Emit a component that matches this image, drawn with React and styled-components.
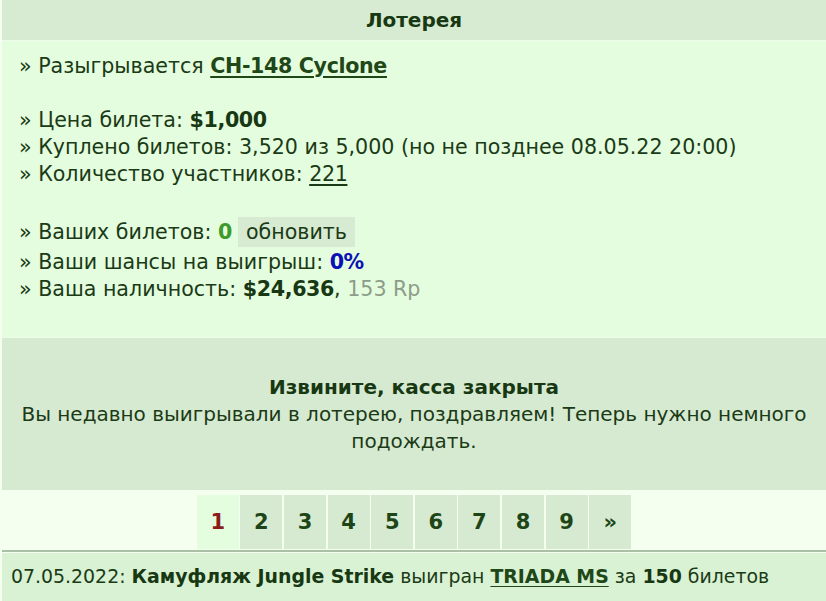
import React from "react";
import styled, { createGlobalStyle } from "styled-components";

const GlobalStyle = createGlobalStyle`
  html, body {
    margin: 0;
    padding: 0;
    background: #f4fff0;
  }
  body {
    font-family: "DejaVu Sans", Verdana, sans-serif;
    font-size: 20px;
    color: #1b3a16;
  }
`;

const Page = styled.div`
  margin-left: 2px;
  display: flex;
  flex-direction: column;
`;

const Title = styled.div`
  background: #d6ebd1;
  height: 40px;
  display: flex;
  align-items: center;
  justify-content: center;
  font-weight: bold;
  color: #173812;
  border-bottom: 1px solid #ecfce8;
`;

const Info = styled.div`
  background: #e4fddf;
  padding: 12px 17px 34px;
  font-size: 20.6px;
  line-height: 27px;

  b, a {
    letter-spacing: -0.35px;
  }
`;

const Line = styled.div`
  min-height: 27px;
`;

const Gap = styled.div`
  height: 27px;
`;

const Strong = styled.b`
  color: ${(p) => p.$tone || "#173812"};
`;

const Link = styled.a`
  color: #1f4718;
  font-weight: bold;
  text-decoration: underline;
  text-underline-offset: 3px;
`;

const Plain = styled.a`
  color: #1b3a16;
  text-decoration: underline;
  text-underline-offset: 3px;
`;

const Muted = styled.span`
  color: #8c9c88;
`;

const RefreshButton = styled.span`
  display: inline-block;
  background: #d6ebd1;
  padding: 2px 8px 1px;
  margin: 2px 0 2px 6px;
  line-height: 27px;
  color: #1b3a16;
`;

const Closed = styled.div`
  background: #d6ead1;
  border-top: 1px solid #ecfce8;
  padding: 36px 16px 35px;
  text-align: center;
  line-height: 27px;
`;

const Pager = styled.div`
  background: #f4fff0;
  display: flex;
  justify-content: center;
  gap: 1.6px;
  padding: 4px 0 1px;
  margin-top: 1px;
  border-bottom: 2px solid #aac0a5;
`;

const PageCell = styled.span`
  width: 42px;
  height: 54px;
  display: flex;
  align-items: center;
  justify-content: center;
  font-weight: bold;
  font-size: 21px;
  background: ${(p) => (p.$current ? "#e4fddf" : "#d6ead1")};
  color: ${(p) => (p.$current ? "#8b1c1c" : "#1d4517")};
`;

const History = styled.div`
  background: #d8f2d3;
  margin-top: 1px;
  padding: 10px 9px 11px;
  font-size: 18.9px;
  line-height: 27px;
`;

const pages = ["1", "2", "3", "4", "5", "6", "7", "8", "9", "»"];

export default function App() {
  return (
    <Page>
      <GlobalStyle />
      <Title>Лотерея</Title>
      <Info>
        <Line>
          » Разыгрывается <Link>CH-148 Cyclone</Link>
        </Line>
        <Gap />
        <Line>
          » Цена билета: <Strong>$1,000</Strong>
        </Line>
        <Line>» Куплено билетов: 3,520 из 5,000 (но не позднее 08.05.22 20:00)</Line>
        <Line>
          » Количество участников: <Plain>221</Plain>
        </Line>
        <Gap />
        <Line>
          » Ваших билетов: <Strong $tone="#3d9a2b">0</Strong>
          <RefreshButton>обновить</RefreshButton>
        </Line>
        <Line>
          » Ваши шансы на выигрыш: <Strong $tone="#0a10b4">0%</Strong>
        </Line>
        <Line>
          » Ваша наличность: <Strong>$24,636</Strong>, <Muted>153 Rp</Muted>
        </Line>
      </Info>
      <Closed>
        <Strong>Извините, касса закрыта</Strong>
        <div>
          Вы недавно выигрывали в лотерею, поздравляем! Теперь нужно немного
          подождать.
        </div>
      </Closed>
      <Pager>
        {pages.map((p, i) => (
          <PageCell key={p} $current={i === 0}>
            {p}
          </PageCell>
        ))}
      </Pager>
      <History>
        07.05.2022: <Strong>Камуфляж Jungle Strike</Strong> выигран{" "}
        <Link>TRIADA MS</Link> за <Strong>150</Strong> билетов
      </History>
    </Page>
  );
}
